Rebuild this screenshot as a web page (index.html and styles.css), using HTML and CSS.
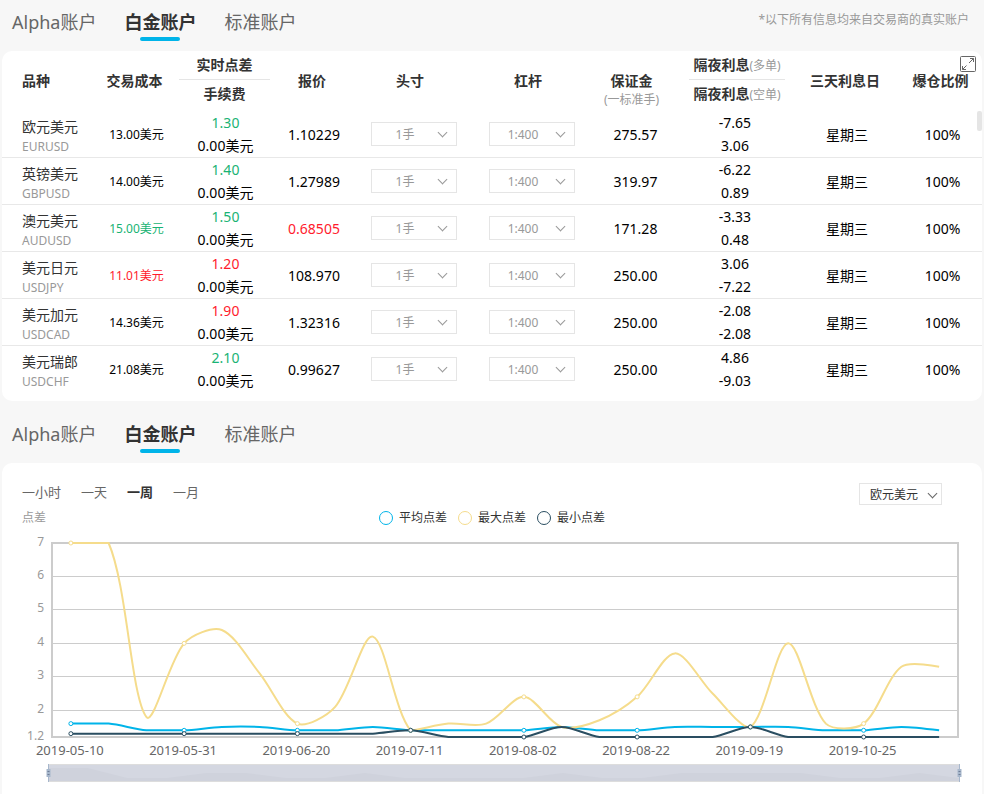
FILE: index.html
```
<!DOCTYPE html>
<html lang="zh-CN">
<head>
  <meta charset="UTF-8" />
  <meta name="viewport" content="width=device-width, initial-scale=1.0" />
  <title>账户点差</title>
  <link rel="stylesheet" href="styles.css">
</head>
<body>
  <header class="account-bar">
    <nav class="tabs">
      <button type="button">Alpha账户</button>
      <button type="button" class="active">白金账户</button>
      <button type="button">标准账户</button>
    </nav>
    <p class="note">*以下所有信息均来自交易商的真实账户</p>
  </header>

  <section class="card quote-card">
    <table class="quotes">
      <colgroup>
        <col class="c-name"><col class="c-cost"><col class="c-spread"><col class="c-price"><col class="c-lots">
        <col class="c-lever"><col class="c-margin"><col class="c-swap"><col class="c-day"><col class="c-ratio">
      </colgroup>
      <thead>
        <tr>
          <th class="name">品种</th>
          <th>交易成本</th>
          <th class="double"><div>实时点差</div><div>手续费</div></th>
          <th>报价</th>
          <th class="pick">头寸</th>
          <th class="pick">杠杆</th>
          <th class="margin">保证金<small>(一标准手)</small></th>
          <th class="double swap"><div>隔夜利息<span>(多单)</span></div><div>隔夜利息<span>(空单)</span></div></th>
          <th>三天利息日</th>
          <th>爆仓比例</th>
        </tr>
      </thead>
      <tbody>
        <tr>
          <td class="name">欧元美元<small>EURUSD</small></td>
          <td class="cost">13.00美元</td>
          <td><div class="up">1.30</div><div>0.00美元</div></td>
          <td>1.10229</td>
          <td><span class="select"><select aria-label="EURUSD 头寸"><option>1手</option></select></span></td>
          <td><span class="select"><select aria-label="EURUSD 杠杆"><option>1:400</option></select></span></td>
          <td>275.57</td>
          <td><div>-7.65</div><div>3.06</div></td>
          <td>星期三</td>
          <td>100%</td>
        </tr>
        <tr>
          <td class="name">英镑美元<small>GBPUSD</small></td>
          <td class="cost">14.00美元</td>
          <td><div class="up">1.40</div><div>0.00美元</div></td>
          <td>1.27989</td>
          <td><span class="select"><select aria-label="GBPUSD 头寸"><option>1手</option></select></span></td>
          <td><span class="select"><select aria-label="GBPUSD 杠杆"><option>1:400</option></select></span></td>
          <td>319.97</td>
          <td><div>-6.22</div><div>0.89</div></td>
          <td>星期三</td>
          <td>100%</td>
        </tr>
        <tr>
          <td class="name">澳元美元<small>AUDUSD</small></td>
          <td class="cost up">15.00美元</td>
          <td><div class="up">1.50</div><div>0.00美元</div></td>
          <td class="down">0.68505</td>
          <td><span class="select"><select aria-label="AUDUSD 头寸"><option>1手</option></select></span></td>
          <td><span class="select"><select aria-label="AUDUSD 杠杆"><option>1:400</option></select></span></td>
          <td>171.28</td>
          <td><div>-3.33</div><div>0.48</div></td>
          <td>星期三</td>
          <td>100%</td>
        </tr>
        <tr>
          <td class="name">美元日元<small>USDJPY</small></td>
          <td class="cost down">11.01美元</td>
          <td><div class="down">1.20</div><div>0.00美元</div></td>
          <td>108.970</td>
          <td><span class="select"><select aria-label="USDJPY 头寸"><option>1手</option></select></span></td>
          <td><span class="select"><select aria-label="USDJPY 杠杆"><option>1:400</option></select></span></td>
          <td>250.00</td>
          <td><div>3.06</div><div>-7.22</div></td>
          <td>星期三</td>
          <td>100%</td>
        </tr>
        <tr>
          <td class="name">美元加元<small>USDCAD</small></td>
          <td class="cost">14.36美元</td>
          <td><div class="down">1.90</div><div>0.00美元</div></td>
          <td>1.32316</td>
          <td><span class="select"><select aria-label="USDCAD 头寸"><option>1手</option></select></span></td>
          <td><span class="select"><select aria-label="USDCAD 杠杆"><option>1:400</option></select></span></td>
          <td>250.00</td>
          <td><div>-2.08</div><div>-2.08</div></td>
          <td>星期三</td>
          <td>100%</td>
        </tr>
        <tr>
          <td class="name">美元瑞郎<small>USDCHF</small></td>
          <td class="cost">21.08美元</td>
          <td><div class="up">2.10</div><div>0.00美元</div></td>
          <td>0.99627</td>
          <td><span class="select"><select aria-label="USDCHF 头寸"><option>1手</option></select></span></td>
          <td><span class="select"><select aria-label="USDCHF 杠杆"><option>1:400</option></select></span></td>
          <td>250.00</td>
          <td><div>4.86</div><div>-9.03</div></td>
          <td>星期三</td>
          <td>100%</td>
        </tr>
      </tbody>
    </table>
    <button type="button" class="expand" aria-label="全屏">
      <svg width="16" height="16" viewBox="0 0 16 16" fill="none" stroke="#666">
        <rect x="0.5" y="0.5" width="15" height="15" rx="1" />
        <path d="M9 7l4.5-4.5M10 2.5h3.5V6M6.500 9.500l-4 4M2.500 10v3.500H6" />
      </svg>
    </button>
    <span class="scroll-thumb"></span>
  </section>

  <nav class="tabs tabs-chart">
    <button type="button">Alpha账户</button>
    <button type="button" class="active">白金账户</button>
    <button type="button">标准账户</button>
  </nav>

  <section class="card chart-card">
    <div class="toolbar">
      <div class="periods">
        <button type="button">一小时</button>
        <button type="button">一天</button>
        <button type="button" class="active">一周</button>
        <button type="button">一月</button>
      </div>
      <span class="select select-pair"><select aria-label="品种"><option>欧元美元</option></select></span>
    </div>
    <div class="legend-row">
      <span class="axis-name">点差</span>
      <ul class="legend">
        <li class="avg">平均点差</li>
        <li class="max">最大点差</li>
        <li class="min">最小点差</li>
      </ul>
    </div>
    <svg id="chart" class="chart" role="img" aria-label="点差走势"></svg>
  </section>
  <script src="script.js"></script>
</body>
</html>
```

FILE: styles.css
```
* {
  box-sizing: border-box;
}

body {
  margin: 0;
  padding: 0 2px;
  background: #f7f7f7;
  color: #000;
  font-family: "Noto Sans", "Noto Sans CJK SC", sans-serif;
  font-size: 14px;
}

button, select {
  font-family: inherit;
  border: 0;
  padding: 0;
  background: none;
  cursor: pointer;
}

/* account tabs */
.account-bar {
  display: flex;
  justify-content: space-between;
}

.note {
  margin: 0;
  padding-right: 13px;
  font-size: 12px;
  line-height: 40px;
  color: #999;
}

.tabs {
  display: flex;
  gap: 28px;
  height: 51px;
  padding-left: 10px;
}

.tabs-chart {
  margin-top: 11px;
}

.tabs button {
  position: relative;
  height: 42px;
  font-size: 18px;
  color: #666;
}

.tabs .active {
  font-weight: bold;
  color: #333;
}

.tabs .active::after {
  content: "";
  position: absolute;
  left: calc(50% - 20px);
  bottom: 1px;
  width: 40px;
  height: 4px;
  border-radius: 2px;
  background: #00b4e9;
}

.card {
  position: relative;
  background: #fff;
  border-radius: 10px;
}

/* quotes table */
.quote-card {
  padding-bottom: 8px;
}

.quotes {
  width: 100%;
  table-layout: fixed;
  border-collapse: separate;
  border-spacing: 0;
}

.c-name { width: 92px; }
.c-cost { width: 85px; }
.c-spread { width: 93px; }
.c-price { width: 84px; }
.c-lots { width: 116px; }
.c-lever { width: 120px; }
.c-margin { width: 87px; }
.c-swap { width: 112px; }
.c-day { width: 112px; }
.c-ratio { width: 79px; }

.quotes th {
  height: 60px;
  padding: 20px 4px 0 0;
  line-height: 20px;
  vertical-align: top;
  color: #333;
  white-space: nowrap;
}

.quotes .pick {
  padding-right: 8px;
}

.quotes th small, .quotes th span {
  font-size: 12px;
  font-weight: normal;
  color: #999;
}

.quotes th small {
  display: block;
  line-height: 18px;
}

.quotes .margin {
  padding-right: 8px;
}

.quotes .double {
  padding: 0 2px 0 0;
}

.quotes .swap {
  padding: 0 6px 0 10px;
}

.double div {
  line-height: 28px;
}

.double div:first-child {
  height: 29px;
  border-bottom: 1px solid #e5e5e5;
}

.quotes td {
  height: 47px;
  padding: 0;
  line-height: 23px;
  text-align: center;
  border-bottom: 1px solid #e8e8e8;
}

.quotes tr:last-child td {
  border-bottom-color: transparent;
}

.quotes .name {
  padding-left: 20px;
  text-align: left;
}

.quotes td.name {
  padding-top: 6px;
  line-height: 20px;
  color: #333;
}

td.name small {
  display: block;
  font-size: 12px;
  color: #999;
}

.quotes .cost {
  font-size: 12px;
}

.up {
  color: #19b374;
}

.down {
  color: #ff1b2d;
}

/* drop-downs */
.select {
  position: relative;
  display: block;
  width: 86px;
  height: 24px;
  margin: 0 auto;
}

.select select {
  display: block;
  appearance: none;
  width: 100%;
  height: 100%;
  padding-right: 18px;
  border: 1px solid #e5e5e5;
  border-radius: 0;
  background: #fff;
  font-size: 12px;
  color: #999;
  text-align-last: center;
}

.select::after {
  content: "";
  position: absolute;
  top: 7px;
  right: 11px;
  width: 6px;
  height: 6px;
  border: solid #999;
  border-width: 0 1px 1px 0;
  transform: rotate(45deg);
  pointer-events: none;
}

.select-pair {
  width: 83px;
  height: 22px;
  margin: 0;
}

.select-pair select {
  padding: 0 0 0 10px;
  color: #333;
  text-align-last: left;
}

.select-pair::after {
  right: 6px;
  border-color: #666;
}

.expand {
  position: absolute;
  top: 5px;
  right: 6px;
  width: 16px;
  height: 16px;
}

.expand svg {
  display: block;
}

.scroll-thumb {
  position: absolute;
  top: 60px;
  right: 0;
  width: 5px;
  height: 20px;
  border-radius: 2px;
  background: #e5e5e5;
}

/* chart */
.chart-card {
  border-radius: 10px 10px 0 0;
}

.toolbar {
  display: flex;
  justify-content: space-between;
  align-items: flex-start;
  padding: 20px 40px 0 20px;
}

.periods {
  display: flex;
  gap: 20px;
}

.periods button {
  font-size: 13px;
  line-height: 18px;
  color: #666;
}

.periods .active {
  font-weight: bold;
  color: #333;
}

.legend-row {
  display: grid;
  grid-template-columns: 1fr auto 1fr;
  padding: 0 20px;
  font-size: 12px;
  line-height: 25px;
}

.axis-name {
  color: #999;
}

.legend {
  display: flex;
  gap: 11px;
  margin: 0;
  padding: 0;
  list-style: none;
  color: #333;
}

.legend li {
  display: flex;
  align-items: center;
  gap: 6px;
}

.legend li::before {
  content: "";
  width: 12px;
  height: 12px;
  border: 1px solid;
  border-radius: 50%;
}

.avg::before { color: #00b4e9; }
.max::before { color: #f5dc8c; }
.min::before { color: #2a4e61; }

.chart {
  display: block;
  width: 100%;
  height: 264px;
}

.chart text {
  font-size: 12px;
  fill: #999;
}

.chart .date {
  font-size: 13px;
  fill: #666;
}
```

FILE: script.js
```
const chart = document.getElementById("chart");

const series = [
  { color: "#00b4e9", data: [1.6, 1.6, 1.4, 1.4, 1.5, 1.5, 1.4, 1.4, 1.5, 1.4, 1.4, 1.4, 1.4, 1.5, 1.4, 1.4, 1.5, 1.5, 1.5, 1.5, 1.4, 1.4, 1.5, 1.4] },
  { color: "#f5dc8c", data: [7, 7, 1.8, 4, 4.4, 3.1, 1.6, 2.1, 4.2, 1.4, 1.6, 1.6, 2.4, 1.5, 1.7, 2.4, 3.7, 2.5, 1.5, 4, 1.6, 1.6, 3.3, 3.3] },
  { color: "#2a4e61", data: [1.3, 1.3, 1.3, 1.3, 1.3, 1.3, 1.3, 1.3, 1.3, 1.4, 1.2, 1.2, 1.2, 1.5, 1.2, 1.2, 1.2, 1.2, 1.5, 1.2, 1.2, 1.2, 1.2, 1.2] }
];
const dates = ["2019-05-10", "2019-05-31", "2019-06-20", "2019-07-11", "2019-08-02", "2019-08-22", "2019-09-19", "2019-10-25"];
const ticks = [7, 6, 5, 4, 3, 2, 1.2];

const gridTop = 13;
const gridBottom = 207;
const gridLeft = 50;
const smooth = 0.3;

function yOf(value) {
  return gridBottom - (value - 1.2) / 5.8 * (gridBottom - gridTop);
}

// smooth curve through the points, control points kept inside the series' range
function smoothPath(points) {
  const ys = points.map(p => p[1]);
  const low = Math.min(...ys);
  const high = Math.max(...ys);
  const clamp = y => Math.max(low, Math.min(high, y));
  let path = `M${points[0]}`;
  let cp0 = points[0];
  for (let i = 1; i < points.length; i++) {
    const p = points[i];
    const prev = points[i - 1];
    const next = points[i + 1];
    let cp1 = p;
    let nextCp = p;
    if (next) {
      const vx = (next[0] - prev[0]) * smooth;
      const vy = (next[1] - prev[1]) * smooth;
      const lenPrev = Math.hypot(p[0] - prev[0], p[1] - prev[1]);
      const lenNext = Math.hypot(p[0] - next[0], p[1] - next[1]);
      const ratio = lenNext / (lenNext + lenPrev);
      cp1 = [p[0] - vx * (1 - ratio), clamp(p[1] - vy * (1 - ratio))];
      nextCp = [p[0] + vx * ratio, clamp(p[1] + vy * ratio)];
    }
    path += `C${cp0} ${cp1} ${p}`;
    cp0 = nextCp;
  }
  return path;
}

function drawChart() {
  const gridRight = chart.clientWidth - 24;
  const step = (gridRight - gridLeft) / 24;
  const xOf = i => gridLeft + step * (i + 0.5);
  let html = "";

  ticks.forEach(t => {
    const y = Math.floor(yOf(t)) + 0.5;
    if (t !== 7 && t !== 1.2) {
      html += `<path d="M${gridLeft} ${y}H${gridRight}" stroke="#ccc"/>`;
    }
    html += `<text x="42" y="${y + 2}" text-anchor="end">${t}</text>`;
  });
  html += `<rect x="${gridLeft}" y="${gridTop}" width="${gridRight - gridLeft}" height="${gridBottom - gridTop}" fill="none" stroke="#ccc" stroke-width="2"/>`;

  dates.forEach((d, i) => {
    html += `<text class="date" x="${xOf(i * 3) - 1}" y="225" text-anchor="middle">${d}</text>`;
  });

  series.forEach(s => {
    const points = s.data.map((v, i) => [xOf(i), yOf(v)]);
    html += `<path d="${smoothPath(points)}" fill="none" stroke="${s.color}" stroke-width="2"/>`;
  });
  series.forEach(s => {
    s.data.forEach((v, i) => {
      if (i % 3 === 0) {
        html += `<circle cx="${xOf(i)}" cy="${yOf(v)}" r="2" fill="#fff" stroke="${s.color}"/>`;
      }
    });
  });

  // zoom slider with the average series as its shadow
  const start = 46;
  const end = gridRight + 1;
  const shadow = series[0].data.map((v, i) => `${start + (end - start) * i / 23},${248 - (v - 1.4) * 50}`);
  html += `<rect x="${start}" y="234" width="${end - start}" height="17" fill="#d4d7e1"/>`;
  html += `<polygon points="${start},251 ${shadow.join(" ")} ${end},251" fill="#cfd2dc"/>`;
  html += `<path d="M${start} 234.5H${end}M${start} 251.5H${end}" stroke="#ddd"/>`;
  [start + 0.5, end + 0.5].forEach(x => {
    html += `<path d="M${x} 234V252" stroke="#a7b7cc"/>`;
    html += `<rect x="${x - 2}" y="239" width="4" height="8" fill="#a7b7cc"/>`;
    html += `<path d="M${x - 1} 241.5h2M${x - 1} 244.5h2" stroke="#6f7d96"/>`;
  });

  chart.innerHTML = html;
}

drawChart();
window.addEventListener("resize", drawChart);
```
